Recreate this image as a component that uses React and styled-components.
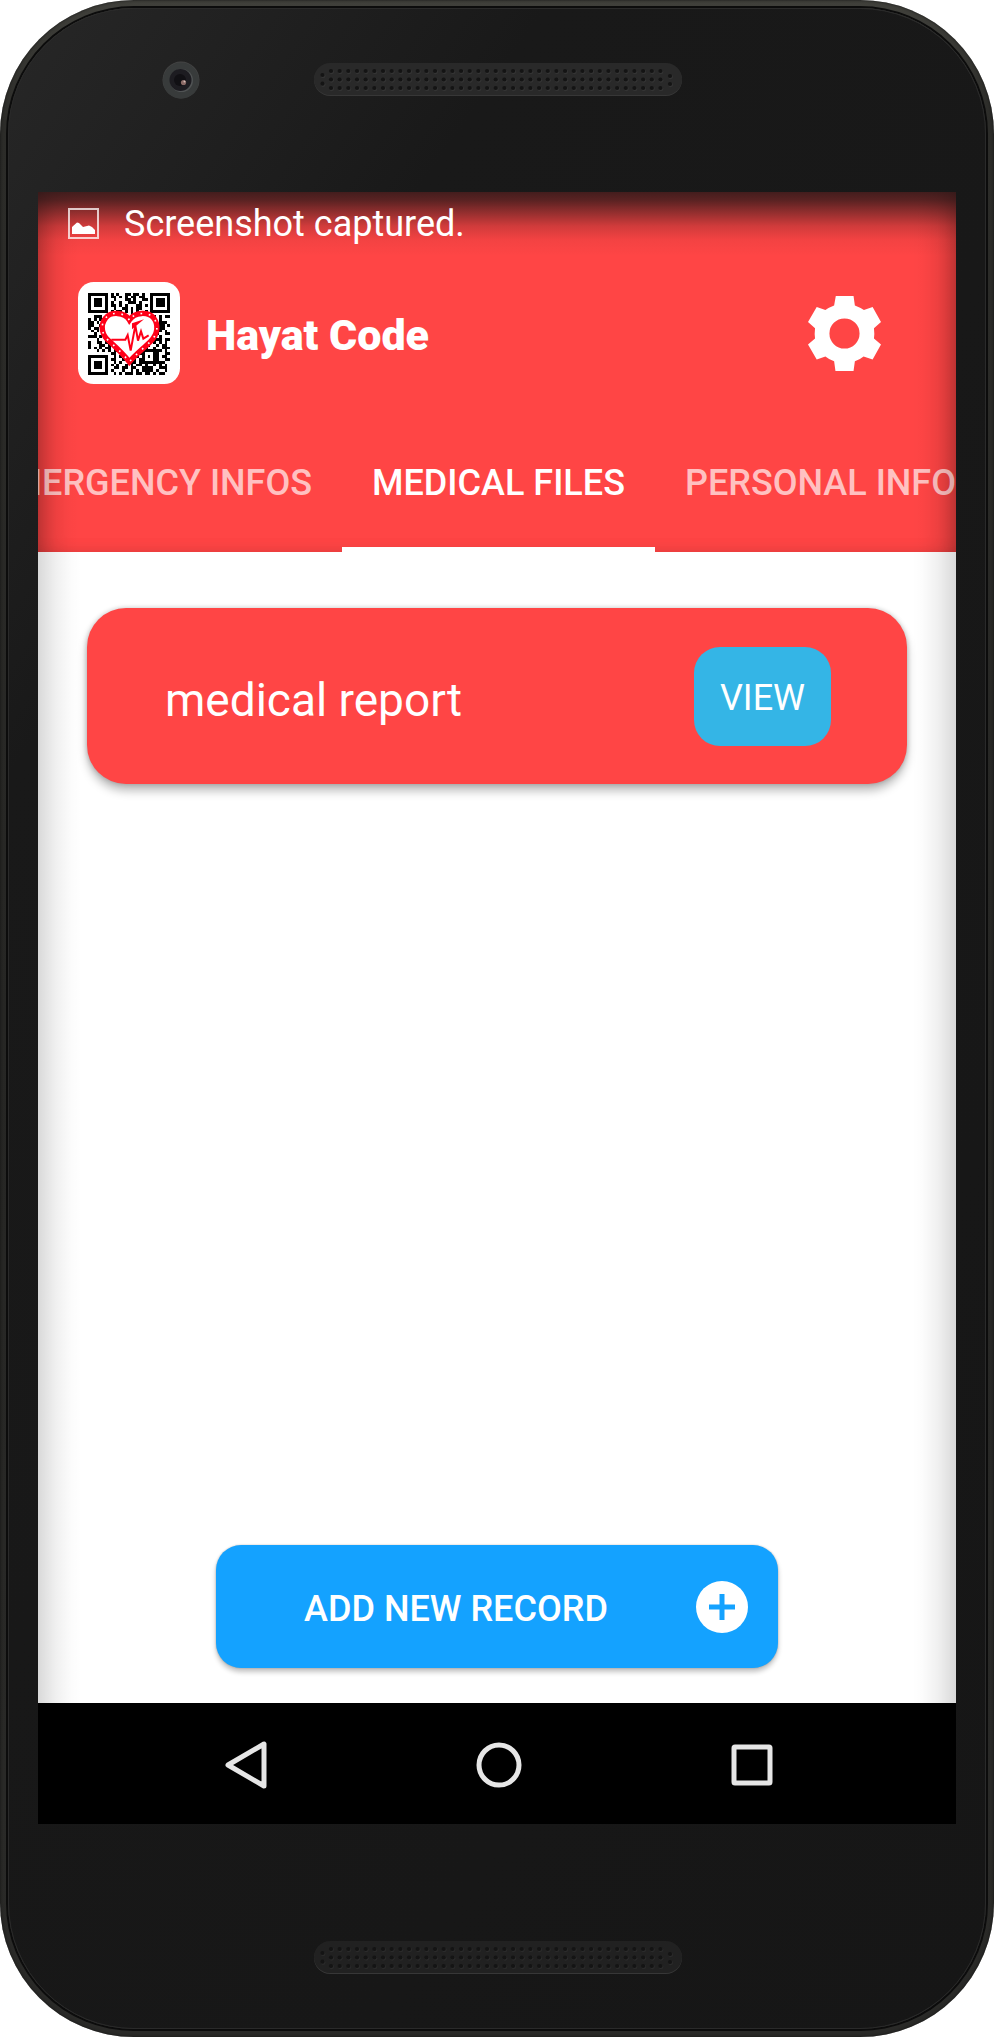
import React from "react";
import styled, { createGlobalStyle } from "styled-components";

const GlobalStyle = createGlobalStyle`
  * { box-sizing: border-box; }
  body { margin: 0; background: #fff; font-family: Roboto, "Liberation Sans", sans-serif; }
  button { font: inherit; color: inherit; border: 0; padding: 0; background: none; cursor: pointer; }
`;

const Phone = styled.div`
  min-height: 100vh;
  display: flex;
  flex-direction: column;
  overflow: hidden;
  padding: 8px;
  border-radius: 134px;
  background: linear-gradient(to bottom, #40403b 0, #2c2c29 120px, #262624 50%, #2a2a28 100%);
  box-shadow: inset 0 0 3px #111;
`;

const Face = styled.div`
  flex: 1;
  display: flex;
  flex-direction: column;
  padding: 0 29px;
  border: 1px solid #2a2a2a;
  border-radius: 126px;
  background: linear-gradient(125deg, #272727 0, #191919 440px, #161616 100%);
  box-shadow: 0 0 0 2px #0c0c0c;
`;

const TopBezel = styled.div`
  height: 183px;
  display: grid;
  grid-template-columns: 1fr 370px 1fr;
  align-items: start;
  padding-top: 52px;
`;

const BottomBezel = styled.div`
  height: 204px;
  display: flex;
  justify-content: center;
  align-items: flex-start;
  padding-top: 115px;
`;

const Camera = styled.svg`
  justify-self: center;
  margin-left: 12px;
`;

const Speaker = styled.svg`
  display: block;
  margin: 2px 0 0 1px;
`;

const Screen = styled.div`
  flex: 1;
  display: flex;
  flex-direction: column;
`;

const AppView = styled.div`
  position: relative;
  flex: 1;
  display: flex;
  flex-direction: column;
  background: #fff;
  &::after {
    content: "";
    position: absolute;
    inset: 0;
    pointer-events: none;
    background:
      linear-gradient(to bottom, rgba(20,20,20,.78) 0, rgba(20,20,20,.7) 8px, rgba(20,20,20,.47) 20px, rgba(20,20,20,.2) 34px, rgba(20,20,20,.05) 48px, transparent 64px),
      linear-gradient(to right, rgba(0,0,0,.15) 0, rgba(0,0,0,.06) 18px, rgba(0,0,0,.01) 34px, transparent 44px),
      linear-gradient(to left, rgba(0,0,0,.15) 0, rgba(0,0,0,.06) 18px, rgba(0,0,0,.01) 34px, transparent 44px);
  }
`;

const Header = styled.header`
  background: #ff4545;
  color: #fff;
  box-shadow: inset 12px 0 24px -12px rgba(0,0,0,.25), inset -12px 0 24px -12px rgba(0,0,0,.25);
`;

const StatusBar = styled.div`
  position: relative;
  z-index: 1;
  height: 62px;
  display: flex;
  align-items: center;
  gap: 25px;
  padding-left: 30px;
  font-size: 36px;
  line-height: 42px;
`;

const StatusText = styled.span`
  padding-top: 2px;
`;

const TitleBar = styled.div`
  height: 156px;
  display: flex;
  align-items: center;
  padding: 2px 75px 0 40px;
`;

const Title = styled.h1`
  flex: 1;
  margin: 0 0 0 26px;
  padding-top: 4px;
  font-family: Roboto, sans-serif;
  font-size: 43px;
  line-height: 52px;
  font-weight: 900;
`;

const Tabs = styled.nav`
  height: 142px;
  display: grid;
  grid-template-columns: minmax(0, 1fr) auto minmax(0, 1fr);
  padding-left: 3px;
  overflow: hidden;
  & > :first-child { justify-self: end; }
  & > :last-child { justify-self: start; }
`;

const Tab = styled.button`
  && {
    padding: 8px 30px 0;
    border-bottom: 5px solid ${p => (p.$active ? "#fff" : "transparent")};
    color: ${p => (p.$active ? "#fff" : "#ffc1c1")};
    font-size: 36px;
    font-weight: 500;
    line-height: 42px;
    white-space: nowrap;
  }
`;

const Content = styled.main`
  flex: 1;
  display: flex;
  flex-direction: column;
  justify-content: space-between;
  align-items: center;
  padding: 56px 49px 35px;
`;

const RecordCard = styled.section`
  align-self: stretch;
  height: 176px;
  display: flex;
  align-items: center;
  justify-content: space-between;
  padding: 0 76px 0 78px;
  border-radius: 39px;
  background: #ff4545;
  color: #fff;
  box-shadow: 0 7px 10px rgba(0,0,0,.26), 0 0 5px rgba(0,0,0,.22);
`;

const RecordName = styled.span`
  padding-top: 8px;
  font-size: 46px;
  line-height: 56px;
`;

const ViewButton = styled.button`
  && {
    width: 137px;
    height: 99px;
    padding-top: 4px;
    border-radius: 26px;
    background: #34b5e6;
    font-size: 36px;
  }
`;

const AddButton = styled.button`
  && {
    width: 562px;
    height: 123px;
    display: flex;
    align-items: center;
    padding: 0 30px 0 0;
    border-radius: 25px;
    background: #14a2ff;
    color: #fff;
    font-size: 36px;
    font-weight: 500;
    box-shadow: 0 4px 5px rgba(0,0,0,.24), 0 0 2px rgba(0,0,0,.25);
  }
`;

const AddLabel = styled.span`
  flex: 1;
  padding-top: 4px;
`;

const NavBar = styled.nav`
  height: 121px;
  display: flex;
  justify-content: center;
  gap: 173px;
  padding: 2px 0 0 3px;
  background: #000;
`;

const NavButton = styled.button`
  && {
    width: 80px;
    display: flex;
    align-items: center;
    justify-content: center;
  }
`;

const dotColumns = Array.from({ length: 39 }, (_, i) => 18 + i * 8.67);

function SpeakerGrille({ dim }) {
  const fill = dim ? "#212121" : "#292929";
  const dots = [
    ...dotColumns.flatMap(x => [8, 16.5, 25].map(y => [x, y])),
    [9.5, 12], [9.5, 20.7], [357, 13], [357, 21],
  ];
  return (
    <Speaker width="370" height="34" viewBox="0 0 370 34" aria-hidden="true">
      <rect x="1" y="1" width="368" height="32" rx="16" fill="#373737" />
      <rect x="1" y="0" width="368" height="32" rx="16" fill={fill} />
      {dots.map(([x, y]) => (
        <g key={`${x}-${y}`}>
          <circle cx={x + 0.6} cy={y + 0.8} r="2.4" fill={dim ? "#2b2b2b" : "#343434"} />
          <circle cx={x} cy={y} r="2.1" fill="#141414" />
        </g>
      ))}
    </Speaker>
  );
}

const qrRows = [
  "#######.#.#..##.##.#..#######",
  "#.....#.##.#.#.##.##..#.....#",
  "#.###.#..#...##.#..##.#.###.#",
  "#.###.#.#..#..###.#...#.###.#",
  "#.###.#.##.#.#...##.#.#.###.#",
  "#.....#..#..##.#.##...#.....#",
  "#######.#.##.#.#.#..#.#######",
  "........#.#.#..##.##.........",
  "..###.#.##.#.#.#..#.##.#.#.##",
  "#.#.##.#..#.#.##.#.##.##.#...",
  "##.#..##.#.##..#.##.#..#.###.",
  "##..##..#..#.##.#..#.###.##.#",
  "#.##..#.##.#..#.##.##.#.###..",
  ".#.#.#..#.##.#..#.#..##..#.#.",
  "..#..##.#..#.##.#.##..#.#..##",
  "###.#..#.##.#..#.##.##.#.#...",
  "...#..##..#.#.##.#..#.####.##",
  "#..##.#.##.#..#..##.##.#.#.#.",
  "#...##.#..#.##.#.#.###..#.##.",
  "#.#.#.##.#..#.##.##.#..#..###",
  "...#.#.#.##.#.#..#.#######.#.",
  "........##..#..#.###...##..##",
  "#######..#.#.#.#.#.#.#.##.##.",
  "#.....#.##..##..#.##...##..##",
  "#.###.#..#.#...##.#########..",
  "#.###.#.#.#..#.#.##.#..#.#.#.",
  "#.###.#..##.##.##..####..###.",
  "#.....#.#...#..#.#.####.#..#.",
  "#######..#.#.###.##.##.#.##..",
];

const heart =
  "M132 90 C118 66 76 64 61 84 C42 108 51 136 72 154 C94 174 116 194 132 216 C150 194 174 176 196 154 C218 132 220 104 205 84 C188 64 148 66 132 90 Z";

function Logo() {
  return (
    <svg width="102" height="102" viewBox="-22 -24 306 306" role="img" aria-label="Hayat Code">
      <rect x="-22" y="-24" width="306" height="306" rx="47" fill="#fff" />
      <path
        fill="#000"
        shapeRendering="crispEdges"
        d={qrRows
          .flatMap((row, y) =>
            [...row].map((c, x) => (c === "#" ? `M${8 + x * 8.5} ${8 + y * 8.5}h8.5v8.5h-8.5z` : ""))
          )
          .join("")}
      />
      <path d={heart} fill="#fff" stroke="#ff0018" strokeWidth="16" />
      <path d={heart} fill="none" stroke="#fff" strokeWidth="5" strokeDasharray="5 20" />
      <path d="M140 118 L176 88 L140 100 Z" fill="#ff0018" />
      <path
        d="M78 149 H120 L127 135 L136 182 L150 106 L158 152 L167 124 L174 146 L190 136"
        fill="none"
        stroke="#ff0018"
        strokeWidth="6"
      />
    </svg>
  );
}

export default function App() {
  return (
    <>
      <GlobalStyle />
      <Phone>
        <Face>
          <TopBezel>
            <Camera width="38" height="38" viewBox="0 0 38 38" aria-hidden="true">
              <circle cx="19" cy="19" r="18.5" fill="#444" />
              <circle cx="19" cy="19.5" r="18" fill="#383b3b" />
              <circle cx="19.5" cy="19.5" r="11.5" fill="#505354" />
              <circle cx="18.5" cy="19" r="11" fill="#1d1c21" />
              <circle cx="18" cy="19" r="6" fill="#111014" />
              <circle cx="21.5" cy="21.5" r="2.6" fill="#8a6a66" />
              <circle cx="22.5" cy="20.5" r="1" fill="#d8c0b8" />
            </Camera>
            <SpeakerGrille />
          </TopBezel>
          <Screen>
            <AppView>
              <Header>
                <StatusBar>
                  <svg width="31" height="31" viewBox="0 0 31 31" aria-hidden="true">
                    <rect x="1" y="1" width="29" height="29" fill="none" stroke="#fff" strokeOpacity=".75" strokeWidth="2" />
                    <path d="M4 26 V19 L9 14.5 L11 15 L15 19 L21 17.5 L24 19 L27 22 V26 Z" fill="#fff" />
                  </svg>
                  <StatusText>Screenshot captured.</StatusText>
                </StatusBar>
                <TitleBar>
                  <Logo />
                  <Title>Hayat Code</Title>
                  <button type="button" aria-label="Settings">
                    <svg width="73" height="75" viewBox="925 316 218 224" fill="#fff" display="block">
                      <path
                        fillRule="evenodd"
                        d="M1008 316H1061L1065 344Q1079 349 1092 358L1118 349L1143 394L1122 412Q1124 428 1122 443L1143 461L1118 506L1091 497Q1079 507 1065 511L1061 540H1007L1003 511Q989 507 977 497L951 506L925 461L946 443Q944 428 946 412L925 394L951 349L977 358Q989 349 1003 344Z M1034 383A45 45 0 1 0 1034 473A45 45 0 1 0 1034 383Z"
                      />
                    </svg>
                  </button>
                </TitleBar>
                <Tabs>
                  <Tab type="button">EMERGENCY INFOS</Tab>
                  <Tab type="button" $active aria-current="page">MEDICAL FILES</Tab>
                  <Tab type="button">PERSONAL INFOS</Tab>
                </Tabs>
              </Header>
              <Content>
                <RecordCard>
                  <RecordName>medical report</RecordName>
                  <ViewButton type="button">VIEW</ViewButton>
                </RecordCard>
                <AddButton type="button">
                  <AddLabel>ADD NEW RECORD</AddLabel>
                  <svg width="52" height="52" viewBox="0 0 52 52" aria-hidden="true">
                    <circle cx="26" cy="26" r="26" fill="#fff" />
                    <path d="M26 13V39M13 26H39" stroke="#14a2ff" strokeWidth="5" />
                  </svg>
                </AddButton>
              </Content>
            </AppView>
            <NavBar>
              <NavButton type="button" aria-label="Back">
                <svg width="42" height="48" viewBox="0 0 42 48">
                  <path d="M3 24L39 3V45Z" fill="none" stroke="#e6e6e6" strokeWidth="5" strokeLinejoin="round" />
                </svg>
              </NavButton>
              <NavButton type="button" aria-label="Home">
                <svg width="46" height="46" viewBox="0 0 46 46">
                  <circle cx="23" cy="23" r="20" fill="none" stroke="#e6e6e6" strokeWidth="5" />
                </svg>
              </NavButton>
              <NavButton type="button" aria-label="Overview">
                <svg width="42" height="42" viewBox="0 0 42 42">
                  <rect x="3" y="3" width="36" height="36" rx="1" fill="none" stroke="#e6e6e6" strokeWidth="5" strokeLinejoin="round" />
                </svg>
              </NavButton>
            </NavBar>
          </Screen>
          <BottomBezel>
            <SpeakerGrille dim />
          </BottomBezel>
        </Face>
      </Phone>
    </>
  );
}
